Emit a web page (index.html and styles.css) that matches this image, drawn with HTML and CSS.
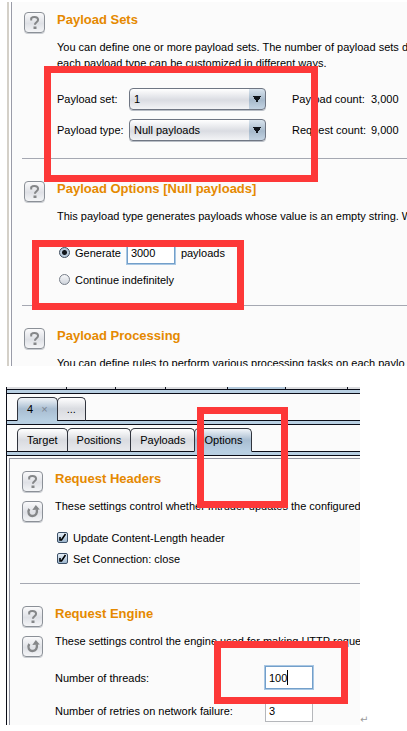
FILE: index.html
```html
<!DOCTYPE html>
<html lang="en">
<head>
<meta charset="utf-8">
<title>Payload configuration</title>
<link rel="stylesheet" href="styles.css">
</head>
<body>
<svg class="defs" aria-hidden="true">
  <symbol id="help" viewBox="0 0 21 21">
    <path d="M7.200 8.400V6.200C8.200 5.200 9.200 5 10.400 5c2.400 0 3.700 1.100 3.700 2.800 0 2.500-3.200 2.500-3.200 5" fill="none" stroke="#858789" stroke-width="2"/>
    <rect x="9.500" y="14.500" width="3" height="2.500" fill="#858789"/>
  </symbol>
  <symbol id="reset" viewBox="0 0 21 21">
    <path d="M7.300 8C5 11.500 7.200 15 10.500 15c3.300 0 5-2.700 4.300-6.700" fill="none" stroke="#858789" stroke-width="2.400"/>
    <path d="M10.300 9l3.500-5 4 4.500z" fill="#858789"/>
  </symbol>
</svg>
<main>
  <section class="shot payloads">
    <div class="pane">
      <section class="block">
        <div class="tools"><button class="tool" aria-label="Payload sets help"><svg><use href="#help"/></svg></button></div>
        <div class="content">
          <h2>Payload Sets</h2>
          <p>You can define one or more payload sets. The number of payload sets d<br>each payload type can be customized in different ways.</p>
          <div class="sets">
            <label for="set">Payload set:</label>
            <select id="set"><option>1</option></select>
            <span class="count">Payload count:</span><span>3,000</span>
            <label for="type">Payload type:</label>
            <select id="type"><option>Null payloads</option></select>
            <span class="count">Request count:</span><span>9,000</span>
          </div>
        </div>
      </section>
      <hr>
      <section class="block">
        <div class="tools"><button class="tool" aria-label="Payload options help"><svg><use href="#help"/></svg></button></div>
        <div class="content">
          <h2>Payload Options [Null payloads]</h2>
          <p>This payload type generates payloads whose value is an empty string. W</p>
          <div class="choices">
            <div class="choice">
              <input type="radio" name="mode" id="generate" checked>
              <label for="generate">Generate</label>
              <input class="field focus" type="text" id="amount" value="3000" aria-label="Number of payloads">
              <label for="amount">payloads</label>
            </div>
            <div class="choice">
              <input type="radio" name="mode" id="continue">
              <label for="continue">Continue indefinitely</label>
            </div>
          </div>
        </div>
      </section>
      <hr class="close-rule">
      <section class="block cut">
        <div class="tools"><button class="tool" aria-label="Payload processing help"><svg><use href="#help"/></svg></button></div>
        <div class="content">
          <h2>Payload Processing</h2>
          <p>You can define rules to perform various processing tasks on each paylo</p>
        </div>
      </section>
    </div>
    <div class="mark mark-sets"></div>
    <div class="mark mark-generate"></div>
  </section>

  <div class="lower">
    <section class="shot options">
      <div class="frame">
        <div class="strip"><i></i><i></i><i></i><i></i><i class="on"></i><i></i><i></i></div>
        <div class="bar"></div>
        <nav class="tabs attacks">
          <button class="tab on">4 <span class="close">×</span></button>
          <button class="tab">...</button>
        </nav>
        <div class="bar"></div>
        <nav class="tabs">
          <button class="tab">Target</button>
          <button class="tab">Positions</button>
          <button class="tab">Payloads</button>
          <button class="tab on">Options</button>
        </nav>
        <div class="bar"></div>
        <div class="pane">
          <section class="block">
            <div class="tools">
              <button class="tool" aria-label="Request headers help"><svg><use href="#help"/></svg></button>
              <button class="tool" aria-label="Reset request headers"><svg><use href="#reset"/></svg></button>
            </div>
            <div class="content">
              <h2>Request Headers</h2>
              <p>These settings control whether Intruder updates the configured</p>
              <div class="checks">
                <div class="check"><input type="checkbox" id="length" checked><label for="length">Update Content-Length header</label></div>
                <div class="check"><input type="checkbox" id="close" checked><label for="close">Set Connection: close</label></div>
              </div>
            </div>
          </section>
          <hr>
          <section class="block">
            <div class="tools">
              <button class="tool" aria-label="Request engine help"><svg><use href="#help"/></svg></button>
              <button class="tool" aria-label="Reset request engine"><svg><use href="#reset"/></svg></button>
            </div>
            <div class="content">
              <h2>Request Engine</h2>
              <p>These settings control the engine used for making HTTP request</p>
              <div class="engine">
                <label for="threads">Number of threads:</label>
                <div class="entry"><input class="field focus" type="text" id="threads" value="100"><span class="caret"></span></div>
                <label for="retries">Number of retries on network failure:</label>
                <input class="field" type="text" id="retries" value="3">
              </div>
            </div>
          </section>
        </div>
      </div>
      <div class="mark mark-tab"></div>
      <div class="mark mark-threads"></div>
    </section>
    <span class="return">↵</span>
  </div>
</main>
</body>
</html>
```
FILE: styles.css
```css
* { box-sizing: border-box; }

body {
  margin: 0;
  background: #fff;
  color: #000;
  font: 11px/16px "Liberation Sans", Arial, sans-serif;
  overflow-x: hidden;
}

button, input, select { font: inherit; color: inherit; margin: 0; }

.defs { position: absolute; width: 0; height: 0; }

main { padding-top: 2px; }

.shot { position: relative; }
.payloads { padding-left: 7px; }

.pane {
  background: #fbfbfb;
  white-space: nowrap;
  overflow: hidden;
}

.payloads .pane {
  border-left: 2px solid #d4d0c8;
  box-shadow: inset 2px 0 #fff, inset 3px 0 #9a9ca8;
  padding-left: 13px;
}

.block {
  display: flex;
  gap: 12px;
  padding: 10px 0 0 2px;
}

.tools {
  display: flex;
  flex-direction: column;
  gap: 9px;
  flex: none;
}

.tool {
  width: 21px;
  height: 21px;
  padding: 0;
  border: 1px solid #8b9097;
  border-radius: 4px;
  background: linear-gradient(#fafafb, #dfe1e6 55%, #f4f5f7);
  box-shadow: 0 1px #c9ccd1;
}
.tool svg { display: block; width: 21px; height: 21px; margin: -1px; }

.content { flex: 1; min-width: 0; }

h2 {
  margin: 0 0 11px;
  font-size: 13px;
  line-height: 16px;
  color: #e58900;
}

p { margin: 0; }

hr {
  height: 1px;
  margin: 17px 0 12px;
  border: 0;
  background: #a5a8b2;
}
.close-rule { margin: 12px 0; }

/* Payload sets */
.sets {
  display: grid;
  grid-template-columns: 60px 137px 81px auto;
  justify-content: start;
  align-items: center;
  column-gap: 12px;
  row-gap: 9px;
  padding-top: 17px;
}
.sets .count { padding-left: 14px; }

select {
  appearance: none;
  height: 22px;
  padding: 0 4px;
  border: 1px solid #6f7683;
  border-radius: 4px;
  background:
    conic-gradient(from -30deg at 50% 100%, #10151b 60deg, transparent 0) right 4px center / 8px 7px no-repeat,
    linear-gradient(#d9e4ee, #a6b9cb 55%, #c4d4e3) right / 16px 100% no-repeat,
    linear-gradient(#fff, #dadce2 55%, #f3f4f6);
  box-shadow: 0 1px #b9bec6;
}

/* Radio choices */
.choices { padding: 15px 0 0 2px; }
.choice { display: flex; align-items: center; height: 27px; }

input[type="radio"], input[type="checkbox"] {
  appearance: none;
  flex: none;
  width: 11px;
  height: 11px;
  margin-right: 5px;
  border: 1px solid #777e89;
  background: linear-gradient(#f6f7f9, #cfd4dc);
}
input[type="radio"] { border-radius: 50%; }
input[type="radio"]:checked {
  border-color: #3c4c5e;
  background: radial-gradient(circle, #10151b 2px, #b9cbdc 3px);
}
input[type="checkbox"] { border-radius: 2px; }
input[type="checkbox"]:checked {
  border-color: #3c5068;
  background: url("data:image/svg+xml,%3Csvg xmlns='http://www.w3.org/2000/svg' viewBox='0 0 9 9'%3E%3Cpath d='M2 4v3h1.500L7.500 1' fill='none' stroke='%23000' stroke-width='1.600'/%3E%3C/svg%3E") center / 9px 9px, linear-gradient(#e6eff7, #9db6ce);
}

.field {
  display: block;
  width: 48px;
  height: 23px;
  padding: 0 3px;
  border: 1px solid #b5b7bb;
  border-radius: 0;
  background: #fff;
  outline: 0;
}
.field.focus {
  border-color: #739fca;
  box-shadow: 0 0 0 1px #a9c7e3;
}
.choice .field { margin: 0 6px; }

.cut { height: 48px; overflow: hidden; }

/* Options view */
.lower {
  display: flex;
  align-items: flex-end;
  padding: 21px 0 0 6px;
}
.options { width: 89%; max-width: 354px; }

.frame {
  background: #fbfbfb;
  border-left: 1px solid #0b0d18;
}

.strip { display: flex; height: 2px; }
.strip i { flex: 49; border-right: 1px solid #10131d; background: #dcdde0; }
.strip i:first-child { flex: 59; }
.strip i:nth-child(4), .strip i:nth-child(6) { flex: 62; }
.strip .on { flex: 57; background: #b5cadc; }
.strip i:last-child { flex: 12; border: 0; }

.bar {
  height: 5px;
  border: 1px solid #0b0d18;
  border-width: 1px 0;
  background: #b8cfe2;
}

.tabs { display: flex; padding: 3px 0 0 10px; }
.tab {
  height: 24px;
  margin: 0 -1px -1px 0;
  padding: 0 9px;
  border: 1px solid #30343d;
  border-bottom-color: #0b0d18;
  border-radius: 5px 5px 0 0;
  background: linear-gradient(#fff, #d9dbe0 50%, #e8e9ec);
  z-index: 1;
}
.tab.on {
  border-bottom-color: #b8cfe2;
  background: linear-gradient(#f1f5f9, #a8bdd1 50%, #b8cfe2);
}
.close { margin-left: 5px; color: #7b8490; }

.options .pane {
  margin: 2px 0 0 2px;
  padding-left: 10px;
  border: 1px solid #8f929f;
  border-width: 1px 0 0 1px;
}
.options .block { padding-top: 12px; }
.options hr { margin: 14px 0 10px; }

.checks { padding: 13px 0 0 2px; }
.check { display: flex; align-items: center; height: 21px; }

.engine {
  display: grid;
  grid-template-columns: 210px auto;
  justify-content: start;
  align-items: center;
  row-gap: 10px;
  padding: 17px 0 3px;
}
.entry { position: relative; }
.caret {
  position: absolute;
  left: 22px;
  top: 4px;
  width: 1px;
  height: 15px;
  background: #000;
}
.return { color: #9a9a9a; font: 10px/10px "DejaVu Sans", sans-serif; }

/* Highlight rectangles laid over the views */
.mark { position: absolute; z-index: 2; border: 7px solid #fd3838; pointer-events: none; }
.mark-sets { left: 44px; top: 64px; width: 274px; height: 116px; }
.mark-generate { left: 32px; top: 238px; width: 212px; height: 70px; }
.mark-tab { left: 191px; top: 20px; width: 91px; height: 101px; }
.mark-threads { left: 208px; top: 254px; width: 134px; height: 63px; }
```
